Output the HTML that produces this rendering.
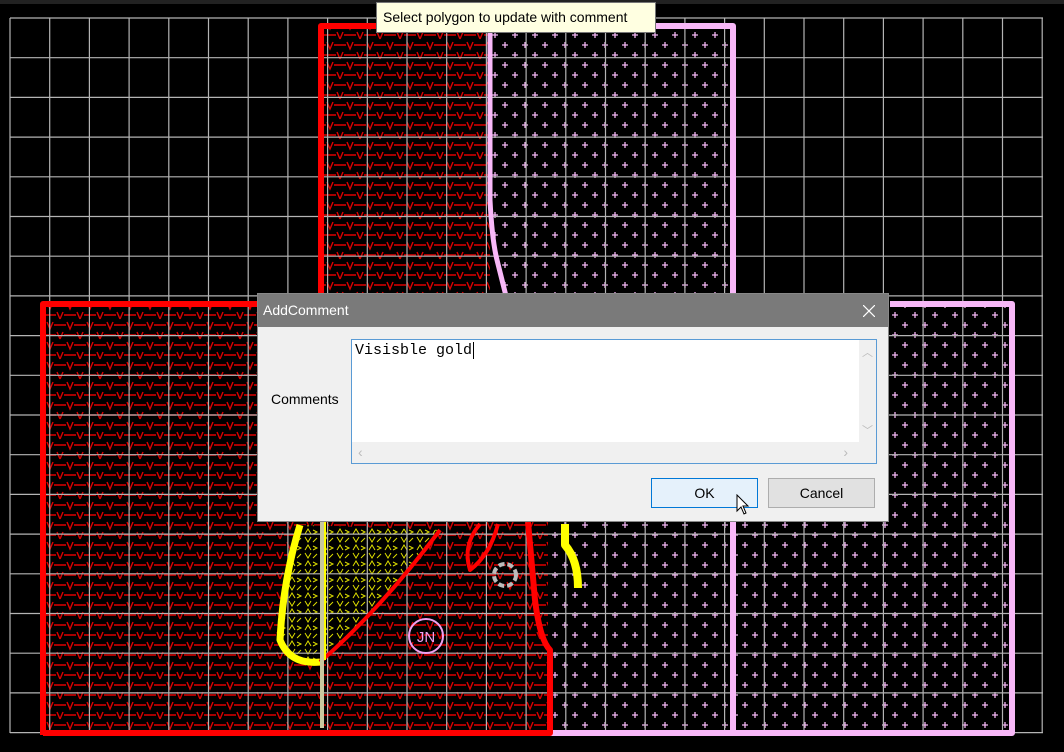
<!DOCTYPE html>
<html><head><meta charset="utf-8"><style>
html,body{margin:0;padding:0;background:#000;width:1064px;height:752px;overflow:hidden;font-family:"Liberation Sans",sans-serif}
.abs{position:absolute}
</style></head><body>
<svg class="abs" style="left:0;top:0" width="1064" height="752" xmlns="http://www.w3.org/2000/svg">
<defs>
<pattern id="rv" width="20" height="20" patternUnits="userSpaceOnUse">
<path d="M0 5H6 M7 2L10 9L13 2 M14 5H20 M10 15H16 M17 12L20 19 M0 19L3 12 M4 15H10" stroke="#d00" stroke-width="1.4" fill="none"/>
</pattern>
<pattern id="pp" width="20" height="20" patternUnits="userSpaceOnUse">
<path d="M5 2V8M2 5H8M15 12V18M12 15H18" stroke="#f4b6f4" stroke-width="1.3"/>
</pattern>
<pattern id="yv" width="16" height="16" patternUnits="userSpaceOnUse">
<path d="M1 6L4 1L7 6M9 2L13 4L9 6M1 9L4 14L7 9M9 14L13 10" stroke="#dd0" stroke-width="1" fill="none"/>
</pattern>
</defs>
<rect x="0" y="0" width="1064" height="4" fill="#222"/>
<rect x="320" y="24" width="170" height="280" fill="url(#rv)"/>
<rect x="42" y="302" width="506" height="432" fill="url(#rv)"/>
<path d="M490 24H733V300H505 Q495 260 492 230Z" fill="url(#pp)"/>
<rect x="548" y="302" width="465" height="432" fill="url(#pp)"/>
<path d="M300 525 Q283 580 280 640 Q290 665 320 662 Q380 610 440 530Z" fill="#000"/>
<path d="M300 525 Q283 580 280 640 Q290 665 320 662 Q380 610 440 530Z" fill="url(#yv)"/>
<g stroke="#b4b4b4" stroke-width="1.2">
<path d="M10 18V733M49.7 18V733M89.4 18V733M129.1 18V733M168.8 18V733M208.5 18V733M248.2 18V733M287.9 18V733M327.6 18V733M367.3 18V733M407 18V733M446.7 18V733M486.4 18V733M526.1 18V733M565.8 18V733M605.5 18V733M645.2 18V733M684.9 18V733M724.6 18V733M764.3 18V733M804 18V733M843.7 18V733M883.4 18V733M923.1 18V733M962.8 18V733M1002.5 18V733M1042.2 18V733"/>
<path d="M10 18H1043M10 57.7H1043M10 97.4H1043M10 137.1H1043M10 176.8H1043M10 216.5H1043M10 256.2H1043M10 295.9H1043M10 335.6H1043M10 375.3H1043M10 415H1043M10 454.7H1043M10 494.4H1043M10 534.1H1043M10 573.8H1043M10 613.5H1043M10 653.2H1043M10 692.9H1043M10 732.6H1043"/>
</g>
<g fill="none" stroke-linejoin="round">
<path d="M321 300V26H490" stroke="#f00" stroke-width="6"/>
<path d="M490 26H733V300" stroke="#f8b8f8" stroke-width="6"/>
<path d="M490 26V200Q492 240 497 260Q502 280 506 296" stroke="#f8b8f8" stroke-width="5"/>
<path d="M43 735V304H260" stroke="#f00" stroke-width="6"/>
<path d="M890 304H1012V733H548" stroke="#f8b8f8" stroke-width="6"/>
<path d="M43 733H550V650Q540 640 535 600L528 522" stroke="#f00" stroke-width="6"/>
<path d="M733 522V733" stroke="#f8b8f8" stroke-width="6"/>
<path d="M300 525Q283 580 280 640Q290 665 320 662" stroke="#ff0" stroke-width="7"/>
<path d="M320 662Q380 610 440 530" stroke="#f00" stroke-width="4"/>
<path d="M322 522V728" stroke="#c8c8a0" stroke-width="4"/>
<path d="M325 522V660" stroke="#ff0" stroke-width="2"/>
<path d="M480 524Q462 545 470 570Q490 555 498 524" stroke="#f00" stroke-width="4"/>
<path d="M565 524V545Q578 560 578 588" stroke="#ff0" stroke-width="8"/>
<circle cx="505" cy="575" r="11" stroke="#bbb" stroke-width="4" stroke-dasharray="6 3"/>
<circle cx="426" cy="636" r="17" stroke="#f0a0f0" stroke-width="2"/>
</g>
<text x="426" y="642" font-size="15" fill="#f0a0f0" text-anchor="middle" font-family="Liberation Sans">JN</text>
</svg>
<div class="abs" style="left:376px;top:2px;width:280px;height:31px;background:#ffffe1;border:1px solid #767676;box-sizing:border-box;font-size:14px;line-height:29px;padding-left:6px;color:#000">Select polygon to update with comment</div>
<div class="abs" style="left:257px;top:293px;width:632px;height:229px;background:#f0f0f0;border:1px solid #888;box-sizing:border-box">
<div style="height:33px;background:#7a7a7a;color:#fff;font-size:14px;line-height:33px;padding-left:5px;position:relative">AddComment
<svg style="position:absolute;right:13px;top:11px" width="12" height="12"><path d="M0 0L12 12M12 0L0 12" stroke="#fff" stroke-width="1.2"/></svg></div>
<div class="abs" style="left:13px;top:97px;font-size:14px;color:#000">Comments</div>
<div class="abs" style="left:93px;top:45px;width:526px;height:125px;border:1px solid #5a9bd5;background:#fff;box-sizing:border-box">
<div style="padding:2px 3px;font-family:'Liberation Mono',monospace;font-size:15px;color:#000">Visisble gold<span style="border-left:1px solid #000;margin-left:1px"></span></div>
<div class="abs" style="right:0;top:0;width:17px;height:102px;background:#f0f0f0;color:#bbb;font-size:11px;text-align:center"><div style="margin-top:4px">︿</div><div style="margin-top:62px">﹀</div></div>
<div class="abs" style="left:0;bottom:0;width:524px;height:21px;background:#f0f0f0;color:#bbb;font-size:14px;line-height:21px"><span style="margin-left:6px">‹</span><span style="float:right;margin-right:28px">›</span></div>
</div>
<div class="abs" style="left:393px;top:184px;width:107px;height:30px;background:#e5f1fb;border:1px solid #0078d7;box-sizing:border-box;text-align:center;line-height:28px;font-size:14px">OK</div>
<div class="abs" style="left:510px;top:184px;width:107px;height:30px;background:#e1e1e1;border:1px solid #adadad;box-sizing:border-box;text-align:center;line-height:28px;font-size:14px">Cancel</div>
<svg class="abs" style="left:478px;top:200px" width="14" height="22"><path d="M1 1V17L5 13L8 20L10 19L7 12H12Z" fill="#fff" stroke="#000" stroke-width="1"/></svg>
</div>
</body></html>
